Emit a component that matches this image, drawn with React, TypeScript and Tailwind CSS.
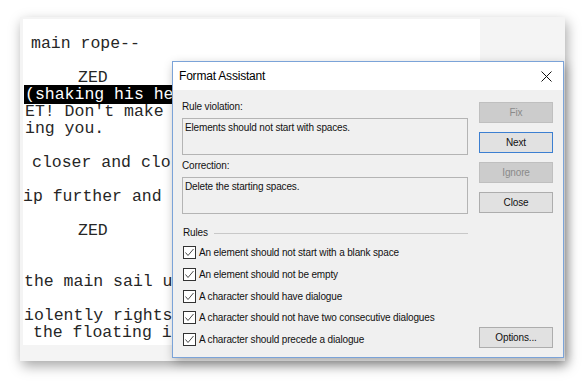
import React from 'react';

const lines: { t: string; x?: number; hl?: boolean }[] = [
  { t: 'main rope--', x: 8 },
  { t: '' },
  { t: 'ZED', x: 55 },
  { t: '(shaking his he', x: 1, hl: true },
  { t: "ET! Don't make", x: 2 },
  { t: 'ing you.', x: 2 },
  { t: '' },
  { t: 'closer and clo', x: 9 },
  { t: '' },
  { t: 'ip further and', x: 0 },
  { t: '' },
  { t: 'ZED', x: 55 },
  { t: '' },
  { t: '' },
  { t: 'the main sail u', x: 1 },
  { t: '' },
  { t: 'iolently rights', x: 1 },
  { t: 'the floating i', x: 10 },
];

const rules = [
  'An element should not start with a blank space',
  'An element should not be empty',
  'A character should have dialogue',
  'A character should not have two consecutive dialogues',
  'A character should precede a dialogue',
];

const Checkbox = () => (
  <span className="w-[13px] h-[13px] border border-[#333333] bg-white flex items-center justify-center shrink-0">
    <svg width="11" height="11" viewBox="0 0 11 11">
      <path d="M1.5 5.5 L4 8.5 L9.5 2" fill="none" stroke="#4a4a4a" strokeWidth="1" />
    </svg>
  </span>
);

const Button = ({ label, kind }: { label: string; kind: 'disabled' | 'default' | 'normal' }) => {
  const cls =
    kind === 'disabled'
      ? 'bg-[#cccccc] border-[#bfbfbf] text-[#8a8a8a]'
      : kind === 'default'
      ? 'bg-[#e1e1e1] border-[#3c7fd1] text-[#111111]'
      : 'bg-[#e1e1e1] border-[#adadad] text-[#111111]';
  return (
    <div className={`w-[74px] h-[21px] border flex items-center justify-center text-[10px] tracking-[-0.15px] ${cls}`}>
      {label}
    </div>
  );
};

export default function App() {
  return (
    <div className="w-[586px] h-[386px] bg-white relative overflow-hidden pt-[17px] pl-[20px]">
      {/* editor window */}
      <div className="w-[545px] h-[344px] bg-[#f4f4f4] shadow-[2px_5px_12px_rgba(0,0,0,0.35)] pt-[2px] pl-[3px]">
        <div
          className="w-[457px] h-[326px] bg-white overflow-hidden pt-[16px] text-[16.5px] leading-[17px] text-[#262626] whitespace-pre"
          style={{ fontFamily: '"Liberation Mono", "Courier New", monospace' }}
        >
          {lines.map((l, i) => (
            <div key={i} className="h-[17px]" style={{ paddingLeft: l.x ?? 0 }}>
              {l.hl ? <span className="bg-black text-white pl-[1px] pr-[12px]">{l.t}</span> : l.t}
            </div>
          ))}
        </div>
      </div>

      {/* Format Assistant dialog */}
      <div
        className="absolute left-[172px] top-[61px] w-[392px] h-[297px] border border-[#7ba3d8] bg-[#f0f0f0] shadow-[2px_4px_10px_rgba(0,0,0,0.3)] flex flex-col text-[#111111]"
        style={{ fontFamily: '"Liberation Sans", Arial, sans-serif' }}
      >
        <div className="h-[28px] bg-white flex items-center justify-between pl-[6px] pr-[11px] shrink-0">
          <span className="text-[12px] tracking-[-0.2px] text-black">Format Assistant</span>
          <svg width="11" height="11" viewBox="0 0 11 11">
            <path d="M0.5 0.5 L10.5 10.5 M10.5 0.5 L0.5 10.5" stroke="#111" strokeWidth="1" />
          </svg>
        </div>

        <div className="flex-1 flex px-[9px] gap-[11px]">
          <div className="w-[286px] flex flex-col pt-[10px] text-[10px] tracking-[-0.15px]">
            <div className="h-[14px] leading-[14px] mb-[4px]">Rule violation:</div>
            <div className="h-[37px] border border-[#b4b4b4] bg-[#f0f0f0] px-[2px] pt-[2px] leading-[14px]">
              Elements should not start with spaces.
            </div>
            <div className="h-[14px] leading-[14px] mt-[4px] mb-[4px]">Correction:</div>
            <div className="h-[37px] border border-[#b4b4b4] bg-[#f0f0f0] px-[2px] pt-[2px] leading-[14px]">
              Delete the starting spaces.
            </div>
            <div className="flex items-center h-[14px] mt-[12px] gap-[6px] pl-[1px]">
              <span className="leading-[14px]">Rules</span>
              <div className="flex-1 h-px bg-[#c8c8c8]" />
            </div>
            <div className="flex flex-col mt-[2px] pl-[1px]">
              {rules.map((r) => (
                <div key={r} className="h-[21.7px] flex items-center gap-[3px]">
                  <Checkbox />
                  <span>{r}</span>
                </div>
              ))}
            </div>
          </div>

          <div className="w-[74px] flex flex-col pt-[12px] pb-[9px] gap-[9px]">
            <Button label="Fix" kind="disabled" />
            <Button label="Next" kind="default" />
            <Button label="Ignore" kind="disabled" />
            <Button label="Close" kind="normal" />
            <div className="mt-auto">
              <Button label="Options..." kind="normal" />
            </div>
          </div>
        </div>
      </div>
    </div>
  );
}
